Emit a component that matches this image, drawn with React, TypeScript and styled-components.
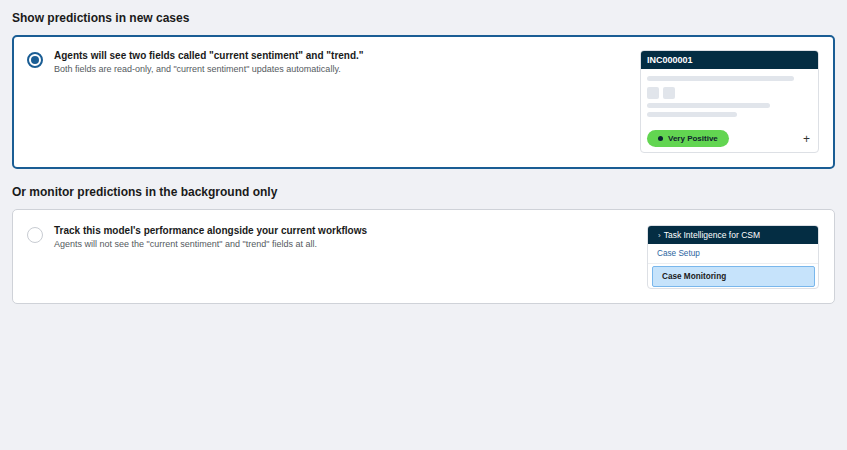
import React, { useState } from "react";
import styled, { createGlobalStyle } from "styled-components";

const GlobalStyle = createGlobalStyle`
  html, body {
    margin: 0;
    padding: 0;
    background: #f0f1f5;
    font-family: "Liberation Sans", Arial, sans-serif;
    color: #1d1d1d;
  }
`;

const Page = styled.div`
  padding: 8px 12px;
  display: flex;
  flex-direction: column;
  gap: 13px;
`;

const Section = styled.section`
  display: flex;
  flex-direction: column;
`;

const Heading = styled.h2`
  margin: 0 0 7px;
  font-size: 12px;
  line-height: 20px;
  font-weight: bold;
  color: #1a1a1a;
`;

const Card = styled.label<{ selected: boolean }>`
  display: flex;
  align-items: flex-start;
  background: #fff;
  border: ${(p) => (p.selected ? "2px solid #1a5d94" : "1px solid #cfd2d8")};
  border-radius: 5px;
  padding: ${(p) => (p.selected ? "13px 14px 14px 13px" : "15px 15px 14px 14px")};
  cursor: pointer;
`;

const Radio = styled.span<{ checked: boolean }>`
  flex: none;
  box-sizing: border-box;
  width: 16px;
  height: 16px;
  margin-top: 2px;
  border-radius: 50%;
  border: ${(p) => (p.checked ? "2px solid #1a5d94" : "1px solid #c8ccd2")};
  display: flex;
  align-items: center;
  justify-content: center;
  background: #fff;

  &::after {
    content: "";
    display: ${(p) => (p.checked ? "block" : "none")};
    width: 8px;
    height: 8px;
    border-radius: 50%;
    background: #1a5d94;
  }
`;

const TextBlock = styled.div`
  flex: 1;
  margin: -1px 0 0 11px;
`;

const Title = styled.div`
  font-size: 10px;
  font-weight: bold;
  line-height: 13px;
  color: #1a1a1a;
`;

const Subtitle = styled.div`
  font-size: 9px;
  line-height: 12px;
  color: #555a60;
  margin-top: 1px;
`;

const Mini = styled.div<{ width: number }>`
  flex: none;
  box-sizing: border-box;
  width: ${(p) => p.width}px;
  background: #fff;
  border: 1px solid #dde0e5;
  border-radius: 4px;
  overflow: hidden;
`;

const MiniHeader = styled.div<{ size: number; indent: number }>`
  background: #042d43;
  color: #fff;
  height: 18px;
  display: flex;
  align-items: center;
  padding: 0 ${(p) => p.indent}px;
  font-size: ${(p) => p.size}px;
  gap: 3px;
`;

const MiniBody = styled.div`
  padding: 7px 6px 5px 6px;
  display: flex;
  flex-direction: column;
`;

const Bar = styled.div<{ width: number; mt: number }>`
  width: ${(p) => p.width}px;
  height: 5px;
  border-radius: 3px;
  background: #e1e5eb;
  margin-top: ${(p) => p.mt}px;
`;

const Squares = styled.div`
  display: flex;
  gap: 4px;
  margin-top: 6px;
`;

const Square = styled.div`
  width: 12px;
  height: 12px;
  border-radius: 2px;
  background: #e1e5eb;
`;

const Footer = styled.div`
  display: flex;
  align-items: center;
  justify-content: space-between;
  margin-top: 13px;
`;

const Pill = styled.div`
  display: flex;
  align-items: center;
  gap: 5px;
  height: 17px;
  padding: 0 11px 0 11px;
  border-radius: 9px;
  background: #62d551;
  font-size: 8px;
  font-weight: bold;
  color: #10222e;
`;

const Dot = styled.span`
  width: 5px;
  height: 5px;
  border-radius: 50%;
  background: #0c2333;
`;

const Plus = styled.span`
  font-size: 12px;
  line-height: 12px;
  color: #333;
  margin-right: 2px;
`;

const NavList = styled.div`
  display: flex;
  flex-direction: column;
`;

const NavItem = styled.div<{ active?: boolean }>`
  font-size: 8.2px;
  line-height: 19px;
  padding: 0 9px;
  color: ${(p) => (p.active ? "#1a1a1a" : "#2b65a0")};
  font-weight: ${(p) => (p.active ? "bold" : "normal")};
  background: ${(p) => (p.active ? "#c6e3fb" : "transparent")};
  border: ${(p) => (p.active ? "1px solid #79b7ec" : "none")};
  border-bottom: ${(p) => (p.active ? "1px solid #79b7ec" : "1px solid #eceef1")};
  border-radius: ${(p) => (p.active ? "2px" : "0")};
  margin: ${(p) => (p.active ? "2px 3px 1px 4px" : "0")};
`;

const Chevron = styled.span`
  font-size: 8px;
  opacity: 0.8;
`;

export default function App() {
  const [choice, setChoice] = useState<"show" | "monitor">("show");

  return (
    <>
      <GlobalStyle />
      <Page>
        <Section>
          <Heading>Show predictions in new cases</Heading>
          <Card selected={choice === "show"} onClick={() => setChoice("show")}>
            <Radio checked={choice === "show"} />
            <TextBlock>
              <Title>Agents will see two fields called "current sentiment" and "trend."</Title>
              <Subtitle>Both fields are read-only, and "current sentiment" updates automatically.</Subtitle>
            </TextBlock>
            <Mini width={179}>
              <MiniHeader size={9} indent={6}>
                <b>INC000001</b>
              </MiniHeader>
              <MiniBody>
                <Bar width={147} mt={0} />
                <Squares>
                  <Square />
                  <Square />
                </Squares>
                <Bar width={123} mt={4} />
                <Bar width={90} mt={4} />
                <Footer>
                  <Pill>
                    <Dot />
                    Very Positive
                  </Pill>
                  <Plus>+</Plus>
                </Footer>
              </MiniBody>
            </Mini>
          </Card>
        </Section>

        <Section>
          <Heading>Or monitor predictions in the background only</Heading>
          <Card selected={choice === "monitor"} onClick={() => setChoice("monitor")}>
            <Radio checked={choice === "monitor"} />
            <TextBlock>
              <Title>Track this model's performance alongside your current workflows</Title>
              <Subtitle>Agents will not see the "current sentiment" and "trend" fields at all.</Subtitle>
            </TextBlock>
            <Mini width={172}>
              <MiniHeader size={8.5} indent={10}>
                <Chevron>›</Chevron>
                Task Intelligence for CSM
              </MiniHeader>
              <NavList>
                <NavItem>Case Setup</NavItem>
                <NavItem active>Case Monitoring</NavItem>
              </NavList>
            </Mini>
          </Card>
        </Section>
      </Page>
    </>
  );
}
